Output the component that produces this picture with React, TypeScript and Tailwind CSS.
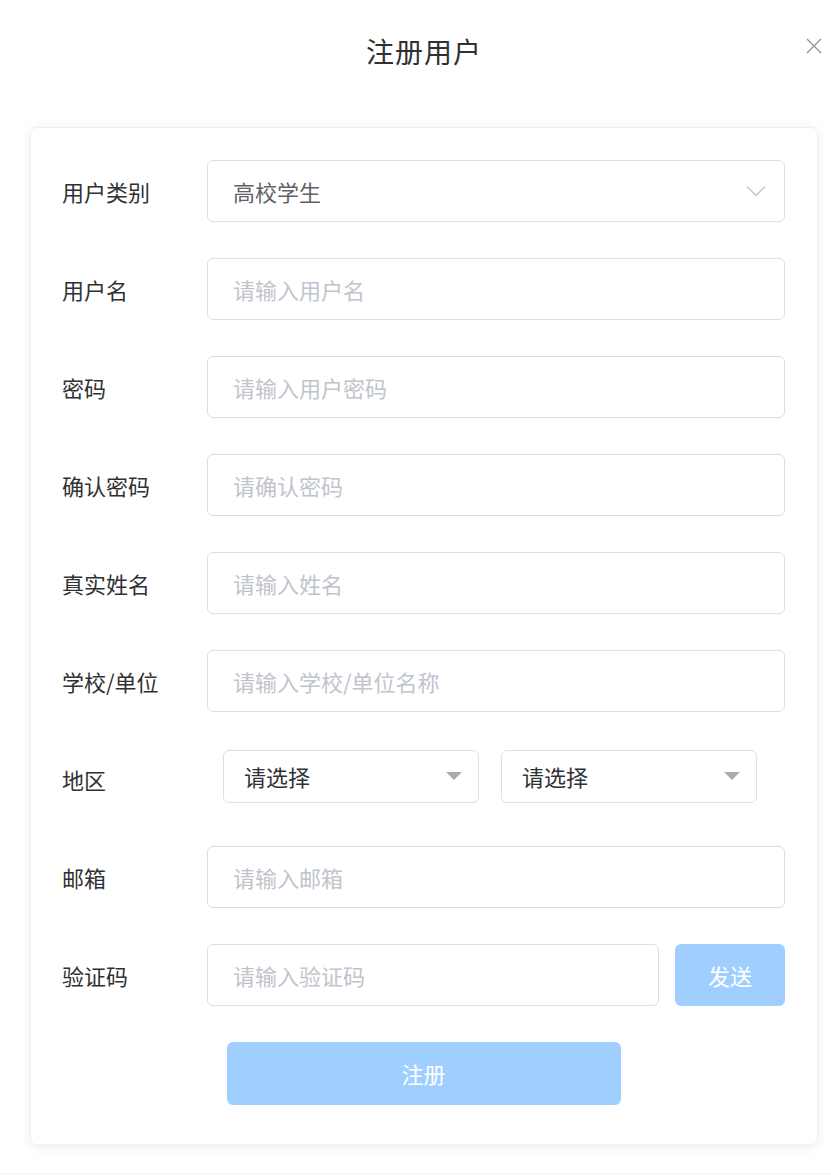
import React from 'react';

const font = { fontFamily: '"Noto Sans CJK SC", "Noto Sans", sans-serif' };

const fields = [
    { label: '用户名', placeholder: '请输入用户名' },
    { label: '密码', placeholder: '请输入用户密码' },
    { label: '确认密码', placeholder: '请确认密码' },
    { label: '真实姓名', placeholder: '请输入姓名' },
    { label: '学校/单位', placeholder: '请输入学校/单位名称' },
];

function Label({ children }: { children: React.ReactNode }) {
    return <div className="w-[145px] shrink-0 text-[22px] text-[#303133]">{children}</div>;
}

function TextInput({ placeholder, className = '' }: { placeholder: string; className?: string }) {
    return (
        <div className={`h-[62px] flex items-center px-[25px] border border-[#dcdfe6] rounded-[6px] bg-white text-[22px] text-[#c0c4cc] ${className}`}>
            {placeholder}
        </div>
    );
}

function RegionSelect() {
    return (
        <div className="w-[256px] h-[53px] flex items-center justify-between pl-[20px] pr-[14px] border border-[#dcdfe6] rounded-[6px] bg-white">
            <span className="text-[22px] text-[#303133]">请选择</span>
            <svg width="20" height="10" viewBox="0 0 20 10">
                <path d="M2 1h16l-8 8z" fill="#a8abb2" />
            </svg>
        </div>
    );
}

export default function App() {
    return (
        <div className="w-[831px] h-[1175px] bg-white relative" style={font}>
            {/* Header */}
            <div className="h-[127px] ml-[30px] w-[788px] flex justify-center pt-[31px]">
                <h1 className="text-[28px] leading-[40px] tracking-[1px] text-[#303133]">注册用户</h1>
            </div>
            <button className="absolute right-[9px] top-[38px] text-[#909399]" aria-label="close">
                <svg width="16" height="16" viewBox="0 0 16 16" fill="none" stroke="currentColor" strokeWidth="1.3">
                    <path d="M1 1l14 14M15 1L1 15" />
                </svg>
            </button>

            {/* Card */}
            <div className="mx-[30px] w-[788px] border border-[#ebeef5] rounded-[6px] shadow-[0_2px_12px_rgba(0,0,0,0.08)] pt-[32px] pb-[39px] pl-[31px] pr-[32px]">
                <div className="flex flex-col gap-[36px]">
                    <div className="flex items-center">
                        <Label>用户类别</Label>
                        <div className="flex-1 h-[62px] flex items-center justify-between pl-[25px] pr-[18px] border border-[#dcdfe6] rounded-[6px]">
                            <span className="text-[22px] text-[#606266]">高校学生</span>
                            <svg width="20" height="12" viewBox="0 0 20 12" fill="none" stroke="#c0c4cc" strokeWidth="1.3">
                                <path d="M1 1.5l9 9 9-9" />
                            </svg>
                        </div>
                    </div>

                    {fields.map((f) => (
                        <div key={f.label} className="flex items-center">
                            <Label>{f.label}</Label>
                            <TextInput placeholder={f.placeholder} className="flex-1" />
                        </div>
                    ))}

                    <div className="flex items-center h-[62px]">
                        <Label>地区</Label>
                        <div className="flex gap-[22px] pl-[16px] -mt-[6px]">
                            <RegionSelect />
                            <RegionSelect />
                        </div>
                    </div>

                    <div className="flex items-center">
                        <Label>邮箱</Label>
                        <TextInput placeholder="请输入邮箱" className="flex-1" />
                    </div>

                    <div className="flex items-center">
                        <Label>验证码</Label>
                        <TextInput placeholder="请输入验证码" className="flex-1" />
                        <button className="ml-[16px] w-[110px] h-[62px] rounded-[6px] bg-[#a0cfff] text-white text-[22px]">发送</button>
                    </div>

                    <div className="flex justify-center">
                        <button className="w-[394px] h-[63px] rounded-[6px] bg-[#a0cfff] text-white text-[22px]">注册</button>
                    </div>
                </div>
            </div>

            <div className="absolute left-0 right-0 top-[1173px] h-px bg-[#f2f2f2]" />
        </div>
    );
}
